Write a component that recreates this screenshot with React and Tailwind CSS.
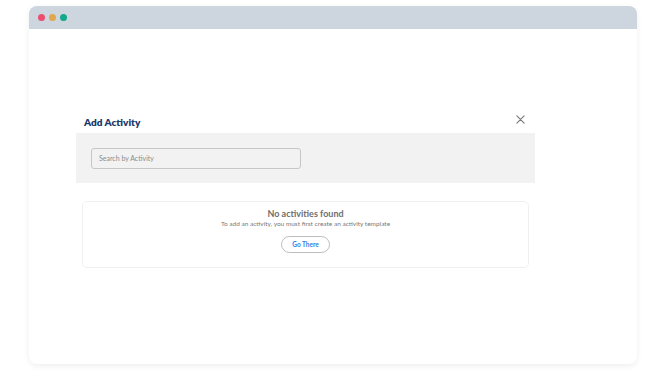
import React from 'react';

const App = () => {
  return (
    <div className="w-[670px] h-[376px] bg-white overflow-hidden" style={{ fontFamily: 'Lato, "Noto Sans", sans-serif' }}>
      {/* Browser window */}
      <div className="ml-[29px] mt-[6px] w-[608px] h-[358px] rounded-[8px] bg-white shadow-[0_2px_6px_rgba(0,0,0,0.07)] flex flex-col overflow-hidden">
        <div className="h-[23px] bg-[#cdd5df] flex items-center gap-[4px] pl-[9px]">
          <span className="w-[7px] h-[7px] rounded-full bg-[#ec4e6e]" />
          <span className="w-[7px] h-[7px] rounded-full bg-[#e0a84a]" />
          <span className="w-[7px] h-[7px] rounded-full bg-[#12a88a]" />
        </div>

        <div className="pt-[81px] pl-[47px]">
          <div className="w-[459px]">
            {/* Header */}
            <div className="h-[23px] flex items-center justify-between pl-[8px] pr-[10px]">
              <h2 className="text-[10px] font-extrabold text-[#1c3a6b] mt-[1px]">Add Activity</h2>
              <svg width="9" height="9" viewBox="0 0 10 10" className="mb-[4px]">
                <path d="M1 1L9 9M9 1L1 9" stroke="#7a7a7a" strokeWidth="1.3" strokeLinecap="round" />
              </svg>
            </div>

            {/* Search panel */}
            <div className="h-[50px] bg-[#f2f2f2] flex items-center pl-[15px]">
              <div className="w-[210px] h-[21px] border border-[#c6c6c6] rounded-[3px] flex items-center pl-[7px]">
                <span className="text-[7px] text-[#8c8c8c]">Search by Activity</span>
              </div>
            </div>

            {/* Empty state */}
            <div className="mt-[18px] ml-[6px] w-[447px] h-[67px] border border-[#efefef] rounded-[5px] flex flex-col items-center pt-[6px]">
              <p className="text-[9px] leading-[11px] font-bold text-[#6e6e6e]">No activities found</p>
              <p className="text-[6.5px] leading-[8px] mt-[1px] text-[#7a7a7a]">To add an activity, you must first create an activity template</p>
              <button className="mt-[8px] w-[49px] h-[17px] rounded-full border border-[#bdbdbd] bg-white flex items-center justify-center">
                <span className="text-[6.5px] font-bold text-[#2f7fe6]">Go There</span>
              </button>
            </div>
          </div>
        </div>
      </div>
    </div>
  );
};

export default App;
